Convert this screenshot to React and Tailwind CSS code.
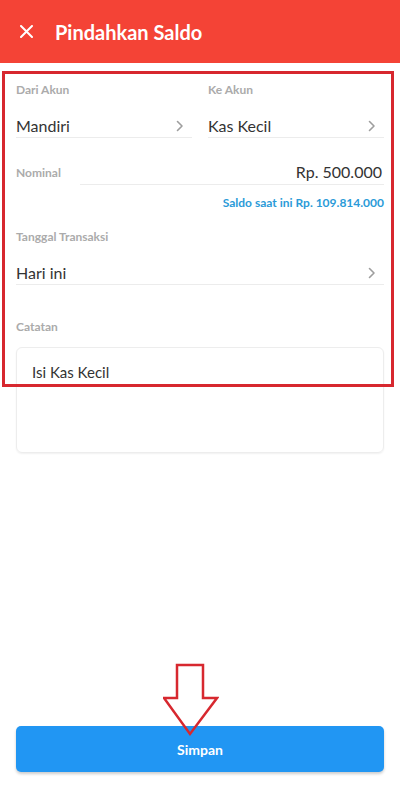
import { useState } from 'react';

function Chevron() {
  return (
    <svg width="8" height="12" viewBox="0 0 8 12" fill="none" className="shrink-0">
      <path d="M1.5 1.5L6 6l-4.5 4.5" stroke="#9e9e9e" strokeWidth="1.6" strokeLinecap="round" strokeLinejoin="round" />
    </svg>
  );
}

function SelectField({ label, value }) {
  return (
    <div className="flex flex-col">
      <p className="text-[12px] leading-[16px] font-bold text-[#ababab]">{label}</p>
      <div className="flex h-[40px] items-end justify-between border-b border-[#ececec]">
        <span className="text-[16px] leading-[22px] text-[#333333]">{value}</span>
        <span className="flex h-[22px] items-center pr-[8px]"><Chevron /></span>
      </div>
    </div>
  );
}

export default function App() {
  const [note, setNote] = useState('Isi Kas Kecil');

  return (
    <div className="relative flex min-h-screen w-full flex-col bg-white" style={{ fontFamily: 'Lato, "Noto Sans", sans-serif' }}>
      {/* Header */}
      <header className="flex h-[63px] items-center bg-[#f44336] text-white">
        <button className="ml-[20px] flex h-[13px] w-[13px] items-center justify-center">
          <svg width="13" height="13" viewBox="0 0 13 13" fill="none">
            <path d="M1 1l11 11M12 1L1 12" stroke="white" strokeWidth="2" strokeLinecap="round" />
          </svg>
        </button>
        <h1 className="ml-[22px] text-[20px] font-bold leading-none">Pindahkan Saldo</h1>
      </header>

      {/* Form */}
      <main className="flex flex-col px-4">
        <div className="mt-[19px] grid grid-cols-2 gap-4">
          <SelectField label="Dari Akun" value="Mandiri" />
          <SelectField label="Ke Akun" value="Kas Kecil" />
        </div>

        <div className="mt-[22px] flex h-[25px] items-center">
          <p className="w-[64px] text-[12px] leading-[16px] font-bold text-[#ababab]">Nominal</p>
          <div className="flex h-full flex-1 items-center justify-end border-b border-[#ececec] pr-[2px]">
            <span className="text-[16px] leading-[22px] text-[#333333]">Rp. 500.000</span>
          </div>
        </div>
        <p className="mt-[10px] text-right text-[12px] leading-[16px] font-bold text-[#2b9bd8]">Saldo saat ini Rp. 109.814.000</p>

        <div className="mt-[18px]">
          <p className="text-[12px] leading-[16px] font-bold text-[#ababab]">Tanggal Transaksi</p>
          <div className="flex h-[40px] items-end justify-between border-b border-[#ececec]">
            <span className="text-[16px] leading-[22px] text-[#333333]">Hari ini</span>
            <span className="flex h-[22px] items-center pr-[8px]"><Chevron /></span>
          </div>
        </div>

        <p className="mt-[34px] text-[12px] leading-[16px] font-bold text-[#ababab]">Catatan</p>
        <div className="mt-[12px] h-[106px] rounded-[6px] border border-[#ededed] px-[15px] pt-[13px] shadow-[0_1px_2px_rgba(0,0,0,0.06)]">
          <textarea
            value={note}
            onChange={(e) => setNote(e.target.value)}
            className="h-full w-full resize-none text-[15px] leading-[22px] text-[#333333] outline-none"
          />
        </div>
      </main>

      {/* Tombol simpan */}
      <div className="mt-auto px-4 pb-[13px]">
        <button className="flex h-[46px] w-full items-center justify-center rounded-[5px] bg-[#2196f3] text-[14px] font-bold text-white shadow-[0_2px_3px_rgba(0,0,0,0.2)]">
          Simpan
        </button>
      </div>

      {/* Anotasi merah */}
      <div className="pointer-events-none absolute left-[2px] top-[71px] h-[316px] w-[392px] border-[3px] border-[#d7282f]" />
      <svg className="pointer-events-none absolute left-[163px] top-[663px]" width="56" height="74" viewBox="0 0 56 74" fill="none">
        <path d="M14 2H40V35H54L27 71L1 35H14Z" stroke="#d7282f" strokeWidth="2.5" strokeLinejoin="miter" />
      </svg>
    </div>
  );
}
